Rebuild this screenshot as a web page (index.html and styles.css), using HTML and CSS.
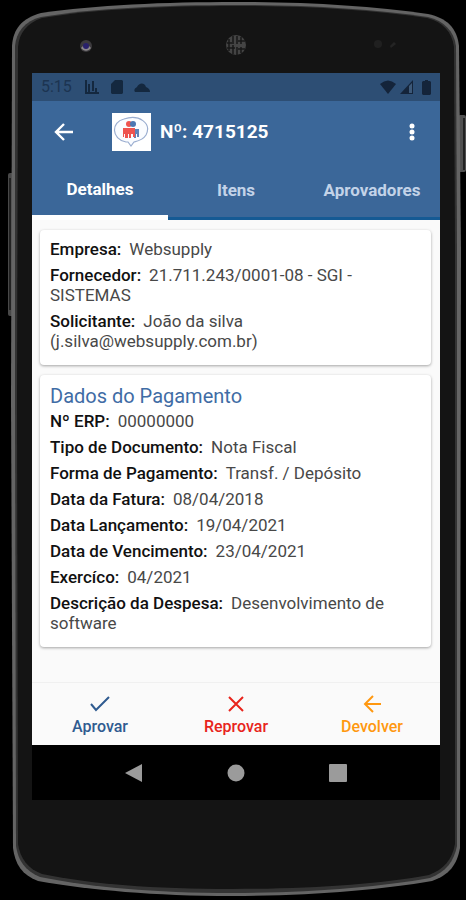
FILE: index.html
```html
<!DOCTYPE html>
<html lang="pt-BR">

<head>
    <meta charset="utf-8">
    <meta name="viewport" content="width=device-width, initial-scale=1">
    <link rel="stylesheet" href="styles.css">
    <title>Detalhes do Pagamento</title>
</head>

<body>
    <div class="phone">
        <!-- phone body -->
        <svg class="phone-frame" viewBox="0 0 466 900" preserveAspectRatio="none" aria-hidden="true">
            <rect x="8" y="173" width="8" height="143" rx="2" fill="#484848"/>
            <rect x="9" y="178" width="2" height="132" fill="#222"/>
            <rect x="458" y="115" width="8" height="57" rx="2" fill="#505050"/>
            <rect x="463" y="118" width="2" height="52" fill="#222"/>
            <path d="M12 46C13 29 22 18 41 13C95 5 165 2 236 2S370 6 428 14C447 18 457 28 459 46L461 250L460 848C457 865 449 875 432 881C380 890 310 896 232 896S90 890 38 881C22 875 15 864 13 848L11 400Z" fill="#646464"/>
            <path d="M15 46C16 32 25 21 41 17C95 8 165 5 236 5S370 9 428 17C444 21 454 31 456 46L457 250L457 846C454 861 446 872 430 878C380 887 310 893 232 893S90 887 40 877C25 871 18 860 16 846L15 400Z" fill="#333"/>
            <path d="M18 47C19 33 27 23 42 18C96 9 165 6 236 6S370 10 427 18C443 22 452 32 454 47L455 250L455 844C452 860 444 869 429 875C380 884 310 889 232 889S90 884 42 874C28 869 20 858 18 844L17 400Z" fill="#141414"/>
            <circle cx="86" cy="46" r="6" fill="#3c3a3d"/>
            <path d="M81 48a6 6 0 0 0 10 0l-2-2h-6z" fill="#8b878a"/>
            <circle cx="86" cy="46" r="3" fill="#29216b"/>
            <circle cx="236" cy="45" r="10" fill="#444"/>
            <path d="M229 39v12M233 36v6m0 3v9M237 36v8m0 3v8M241 37v7m0 3v6M227 43h7m4-2h7M227 48h8m3 1h7" stroke="#171717" stroke-width="1.5" fill="none"/>
            <circle cx="378" cy="44" r="4" fill="#202020"/>
            <path d="M390 46l4-4 2 2-5 4z" fill="#242424"/>
        </svg>

        <div class="screen">
            <div class="status-bar">
                <span class="time">5:15</span>
                <div class="status-left">
                    <svg width="16" height="16" viewBox="0 0 16 16"><path d="M2 1v13h13M5 5v9M9 2v10M12 9v5" stroke="#14283f" stroke-width="2" fill="none"/></svg>
                    <svg width="12" height="14" viewBox="0 0 12 14"><path d="M4 0h7l1 1v12l-1 1H1l-1-1V4z" fill="#14283f"/></svg>
                    <svg class="cloud" width="16" height="9" viewBox="0 0 16 9"><path d="M1 9Q-1 6 3 4C5 0 10-1 12 4c3 1 4 3 4 5z" fill="#14283f"/></svg>
                </div>
                <div class="status-right">
                    <svg width="16" height="14" viewBox="0 0 16 14"><path d="M0 4Q8-3 16 4L8 14z" fill="#14243a"/></svg>
                    <svg width="14" height="14" viewBox="0 0 14 14"><path d="M13 0v14H0z" fill="#14243a"/><path d="M9 6l3-3v10H9z" fill="#3d5979"/></svg>
                    <svg width="9" height="15" viewBox="0 0 9 15"><path d="M3 0h3v1h2l1 1v12l-1 1H1l-1-1V2l1-1h2z" fill="#14243a"/></svg>
                </div>
            </div>

            <header class="app-bar">
                <button class="icon-btn" aria-label="Voltar">
                    <svg width="20" height="20" viewBox="0 0 20 20"><path d="M19 10H2M10 2l-8 8 8 8" stroke="#fff" stroke-width="2.4" fill="none"/></svg>
                </button>
                <svg class="logo" width="39" height="38" viewBox="0 0 39 38">
                    <rect width="39" height="38" fill="#fff"/>
                    <path d="M14 29C-1 26-1 9 12 6c15-5 28 4 22 16-3 5-8 6-12 7l-3 4-3-4z" fill="#fafcff" stroke="#9baed0" stroke-width="1.2"/>
                    <circle cx="17" cy="11" r="3" fill="#ee5450"/>
                    <circle cx="21" cy="11" r="3" fill="#4c76b2"/>
                    <path d="M11 15h10v6h-2v4h-2v-4h-1v4h-3v-4h-1v3h-1z" fill="#ee5450"/>
                    <path d="M21 16h6v8h-2v-3h-1v4h-2v-4h-1z" fill="#5f83b9"/>
                    <path d="M19 15h4v9h-2v-5z" fill="#ee5450"/>
                </svg>
                <h1>Nº: 4715125</h1>
                <button class="icon-btn menu-btn" aria-label="Mais opções">
                    <svg width="6" height="20" viewBox="0 0 6 20" fill="#fff"><circle cx="3" cy="4" r="2.5"/><circle cx="3" cy="10" r="2.5"/><circle cx="3" cy="16" r="2.5"/></svg>
                </button>
            </header>

            <nav class="tabs">
                <button class="tab active">Detalhes</button>
                <button class="tab">Itens</button>
                <button class="tab">Aprovadores</button>
            </nav>

            <main class="content">
                <section class="card">
                    <p><b>Empresa:</b>Websupply</p>
                    <p><b>Fornecedor:</b>21.711.243/0001-08 - SGI - SISTEMAS</p>
                    <p><b>Solicitante:</b>João da silva<br>(j.silva@websupply.com.br)</p>
                </section>

                <section class="card">
                    <h2>Dados do Pagamento</h2>
                    <p><b>Nº ERP:</b>00000000</p>
                    <p><b>Tipo de Documento:</b>Nota Fiscal</p>
                    <p><b>Forma de Pagamento:</b>Transf. / Depósito</p>
                    <p><b>Data da Fatura:</b>08/04/2018</p>
                    <p><b>Data Lançamento:</b>19/04/2021</p>
                    <p><b>Data de Vencimento:</b>23/04/2021</p>
                    <p><b>Exercíco:</b>04/2021</p>
                    <p><b>Descrição da Despesa:</b>Desenvolvimento de software</p>
                </section>
            </main>

            <footer class="actions">
                <button class="action approve">
                    <svg width="20" height="20" viewBox="0 0 20 20"><path d="M1 10l5 6L19 3" stroke="currentColor" stroke-width="2" fill="none"/></svg>
                    Aprovar
                </button>
                <button class="action reject">
                    <svg width="20" height="20" viewBox="0 0 20 20"><path d="M3 3l14 14M17 3L3 17" stroke="currentColor" stroke-width="2" fill="none"/></svg>
                    Reprovar
                </button>
                <button class="action return">
                    <svg width="20" height="20" viewBox="0 0 20 20"><path d="M19 10H3M11 2l-8 8 8 8" stroke="currentColor" stroke-width="2" fill="none"/></svg>
                    Devolver
                </button>
            </footer>

            <div class="system-nav">
                <button class="icon-btn" aria-label="Voltar"><svg width="18" height="18" viewBox="0 0 18 18"><path d="M17 0v18L0 9z" fill="#9b9b9b"/></svg></button>
                <button class="icon-btn" aria-label="Início"><svg width="18" height="18" viewBox="0 0 18 18"><circle cx="9" cy="9" r="8.5" fill="#9b9b9b"/></svg></button>
                <button class="icon-btn" aria-label="Recentes"><svg width="18" height="18" viewBox="0 0 18 18"><rect width="18" height="18" rx="1" fill="#9b9b9b"/></svg></button>
            </div>
        </div>
    </div>
</body>

</html>
```
FILE: styles.css
```css
* {
    box-sizing: border-box;
}

body {
    margin: 0;
    background-color: #000;
    font-family: Roboto, "Liberation Sans", sans-serif;
    font-size: 17px;
    line-height: 20px;
}

h1, h2, p {
    margin: 0;
}

button {
    border: none;
    padding: 0;
    background: none;
    font-family: inherit;
    cursor: pointer;
}

svg {
    display: block;
}

.phone {
    position: relative;
    display: flex;
    min-height: 100vh;
    padding: 73px 26px 100px 32px;
}

.phone-frame {
    position: absolute;
    top: 0;
    left: 0;
    width: 100%;
    height: 100%;
}

.screen {
    position: relative;
    flex: 1;
    min-width: 0;
    display: flex;
    flex-direction: column;
    background-color: #fafafa;
}

/* status bar */
.status-bar {
    display: flex;
    align-items: center;
    height: 28px;
    padding: 0 9px;
    background-color: #2d4e74;
}

.time {
    color: #1c3451;
    font-size: 16px;
}

.status-left {
    display: flex;
    align-items: center;
    gap: 11px;
    margin-left: 12px;
}

.status-right {
    display: flex;
    align-items: center;
    gap: 4px;
    margin-left: auto;
}

.status-right svg:last-child {
    margin-left: 4px;
}

/* header */
.app-bar {
    display: flex;
    align-items: center;
    height: 62px;
    padding: 0 16px 0 22px;
    background-color: #3b6799;
}

.icon-btn {
    display: flex;
    align-items: center;
    justify-content: center;
}

.logo {
    margin-left: 38px;
}

h1 {
    margin-left: 9px;
    color: #fff;
    font-size: 19px;
    font-weight: 700;
    line-height: 24px;
}

.menu-btn {
    width: 24px;
    margin-left: auto;
}

.tabs {
    display: flex;
    background-color: #3b6799;
}

.tab {
    flex: 1;
    height: 57px;
    padding-bottom: 1px;
    border-bottom: 3px solid #155a94;
    color: #c3d3e8;
    font-size: 17px;
    font-weight: 700;
}

.tab.active {
    border-bottom: 5px solid #fff;
    color: #fff;
}

/* cards */
.content {
    flex: 1;
    display: flex;
    flex-direction: column;
    gap: 10px;
    padding: 10px 9px 10px 8px;
}

.card {
    display: flex;
    flex-direction: column;
    gap: 6px;
    padding: 9px 10px 14px;
    border-radius: 4px;
    background-color: #fff;
    box-shadow: 0 1px 3px rgba(0, 0, 0, 0.35);
}

.card h2 {
    margin-bottom: -3px;
    color: #3f6ca5;
    font-size: 20px;
    font-weight: 400;
    line-height: 24px;
}

.card p {
    color: #484848;
}

.card b {
    margin-right: 8px;
    color: #111;
    font-weight: 500;
}

/* bottom buttons */
.actions {
    display: flex;
    height: 63px;
    border-top: 1px solid #f0f0f0;
}

.action {
    flex: 1;
    display: flex;
    flex-direction: column;
    align-items: center;
    padding-top: 11px;
    gap: 3px;
    font-size: 16px;
    font-weight: 500;
    line-height: 20px;
}

.approve {
    color: #2f5b90;
}

.reject {
    color: #e8241c;
}

.return {
    color: #ff9810;
}

.system-nav {
    display: flex;
    align-items: center;
    justify-content: center;
    gap: 84px;
    height: 55px;
    background-color: #000;
}
```
